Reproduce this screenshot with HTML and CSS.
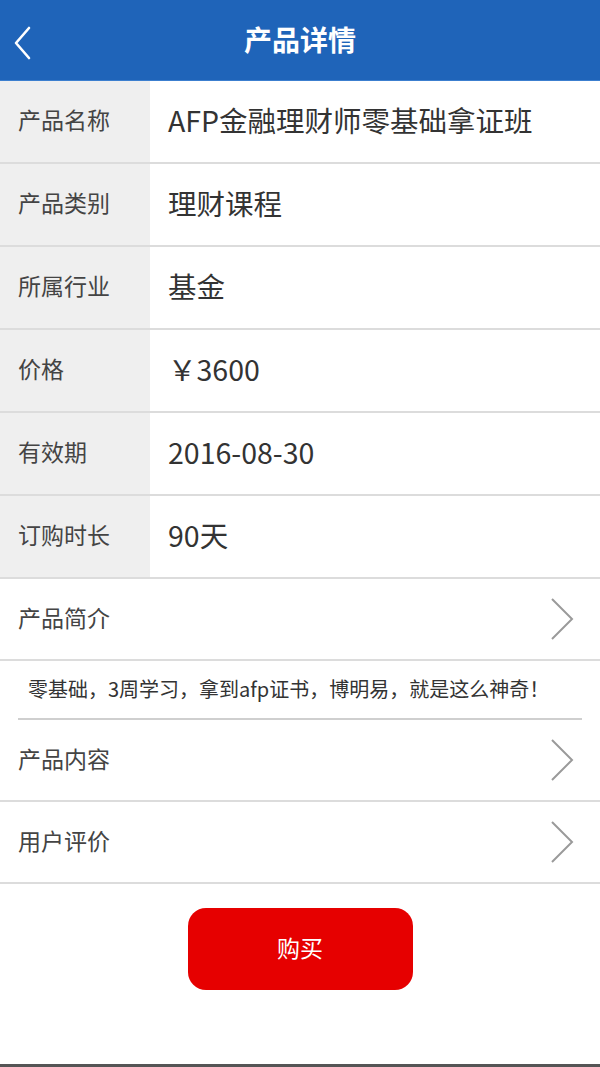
FILE: index.html
```html
<!DOCTYPE html>
<html lang="zh-CN">
<head>
<meta charset="utf-8">
<title>产品详情</title>
<link rel="stylesheet" href="styles.css">
</head>
<body>
<div class="page">
  <header class="topbar">
    <svg class="back" viewBox="0 0 20 34" width="20" height="34"><path d="M16 2 L3 17 L16 32" fill="none" stroke="#fff" stroke-width="2.6" stroke-linecap="round" stroke-linejoin="round"/></svg>
    <h1 class="title">产品详情</h1>
  </header>

  <div class="info">
    <div class="row"><div class="label">产品名称</div><div class="value">AFP金融理财师零基础拿证班</div></div>
    <div class="row"><div class="label">产品类别</div><div class="value">理财课程</div></div>
    <div class="row"><div class="label">所属行业</div><div class="value">基金</div></div>
    <div class="row"><div class="label">价格</div><div class="value">￥3600</div></div>
    <div class="row"><div class="label">有效期</div><div class="value">2016-08-30</div></div>
    <div class="row"><div class="label">订购时长</div><div class="value">90天</div></div>
  </div>

  <div class="link-row">
    <span class="link-text">产品简介</span>
    <svg class="chev" viewBox="0 0 24 44" width="24" height="44"><path d="M2 2 L22 22 L2 42" fill="none" stroke="#9a9a9a" stroke-width="2"/></svg>
  </div>
  <div class="desc">零基础，3周学习，拿到afp证书，博明易，就是这么神奇！</div>
  <div class="link-row">
    <span class="link-text">产品内容</span>
    <svg class="chev" viewBox="0 0 24 44" width="24" height="44"><path d="M2 2 L22 22 L2 42" fill="none" stroke="#9a9a9a" stroke-width="2"/></svg>
  </div>
  <div class="link-row">
    <span class="link-text">用户评价</span>
    <svg class="chev" viewBox="0 0 24 44" width="24" height="44"><path d="M2 2 L22 22 L2 42" fill="none" stroke="#9a9a9a" stroke-width="2"/></svg>
  </div>

  <div class="actions">
    <button class="buy">购买</button>
  </div>
</div>
</body>
</html>
```

FILE: styles.css
```css
* { box-sizing: border-box; }
html, body { margin: 0; padding: 0; background: #fff; }
body {
  font-family: "Noto Sans CJK SC", "Roboto", "Noto Sans", sans-serif;
  color: #333;
}
.page {
  height: 1067px;
  display: flex;
  flex-direction: column;
  border-bottom: 3px solid #555;
}
.topbar {
  height: 81px;
  background: #1f64b9;
  border-bottom: 1px solid #3c7fcf;
  display: flex;
  align-items: center;
  justify-content: center;
  position: relative;
  padding-bottom: 2px;
}
.back {
  position: absolute;
  left: 13px;
  top: 26px;
}
.title {
  margin: 0;
  color: #fff;
  font-size: 28px;
  font-weight: 700;
}
.row {
  display: flex;
  height: 83px;
  border-bottom: 2px solid #dcdcdc;
}
.label {
  width: 150px;
  background: #efefef;
  padding: 0 0 5px 18px;
  display: flex;
  align-items: center;
  font-size: 23px;
  color: #444;
}
.value {
  flex: 1;
  padding: 0 0 5px 18px;
  display: flex;
  align-items: center;
  font-size: 28.5px;
  color: #333;
}
.link-row {
  height: 82px;
  border-bottom: 2px solid #dcdcdc;
  display: flex;
  align-items: center;
  justify-content: space-between;
  padding: 0 26px 0 18px;
}
.link-text {
  font-size: 23px;
  color: #444;
  margin-bottom: 5px;
}
.chev { display: block; }
.desc {
  height: 59px;
  margin: 0 18px;
  padding: 0 0 3px 10px;
  border-bottom: 2px solid #cfcfcf;
  display: flex;
  align-items: center;
  font-size: 20px;
  color: #333;
}
.actions {
  display: flex;
  justify-content: center;
  padding-top: 24px;
}
.buy {
  width: 225px;
  height: 82px;
  border: none;
  border-radius: 18px;
  background: #e60000;
  color: #fff;
  font-family: inherit;
  font-size: 23px;
  padding: 0 0 4px;
}
```
